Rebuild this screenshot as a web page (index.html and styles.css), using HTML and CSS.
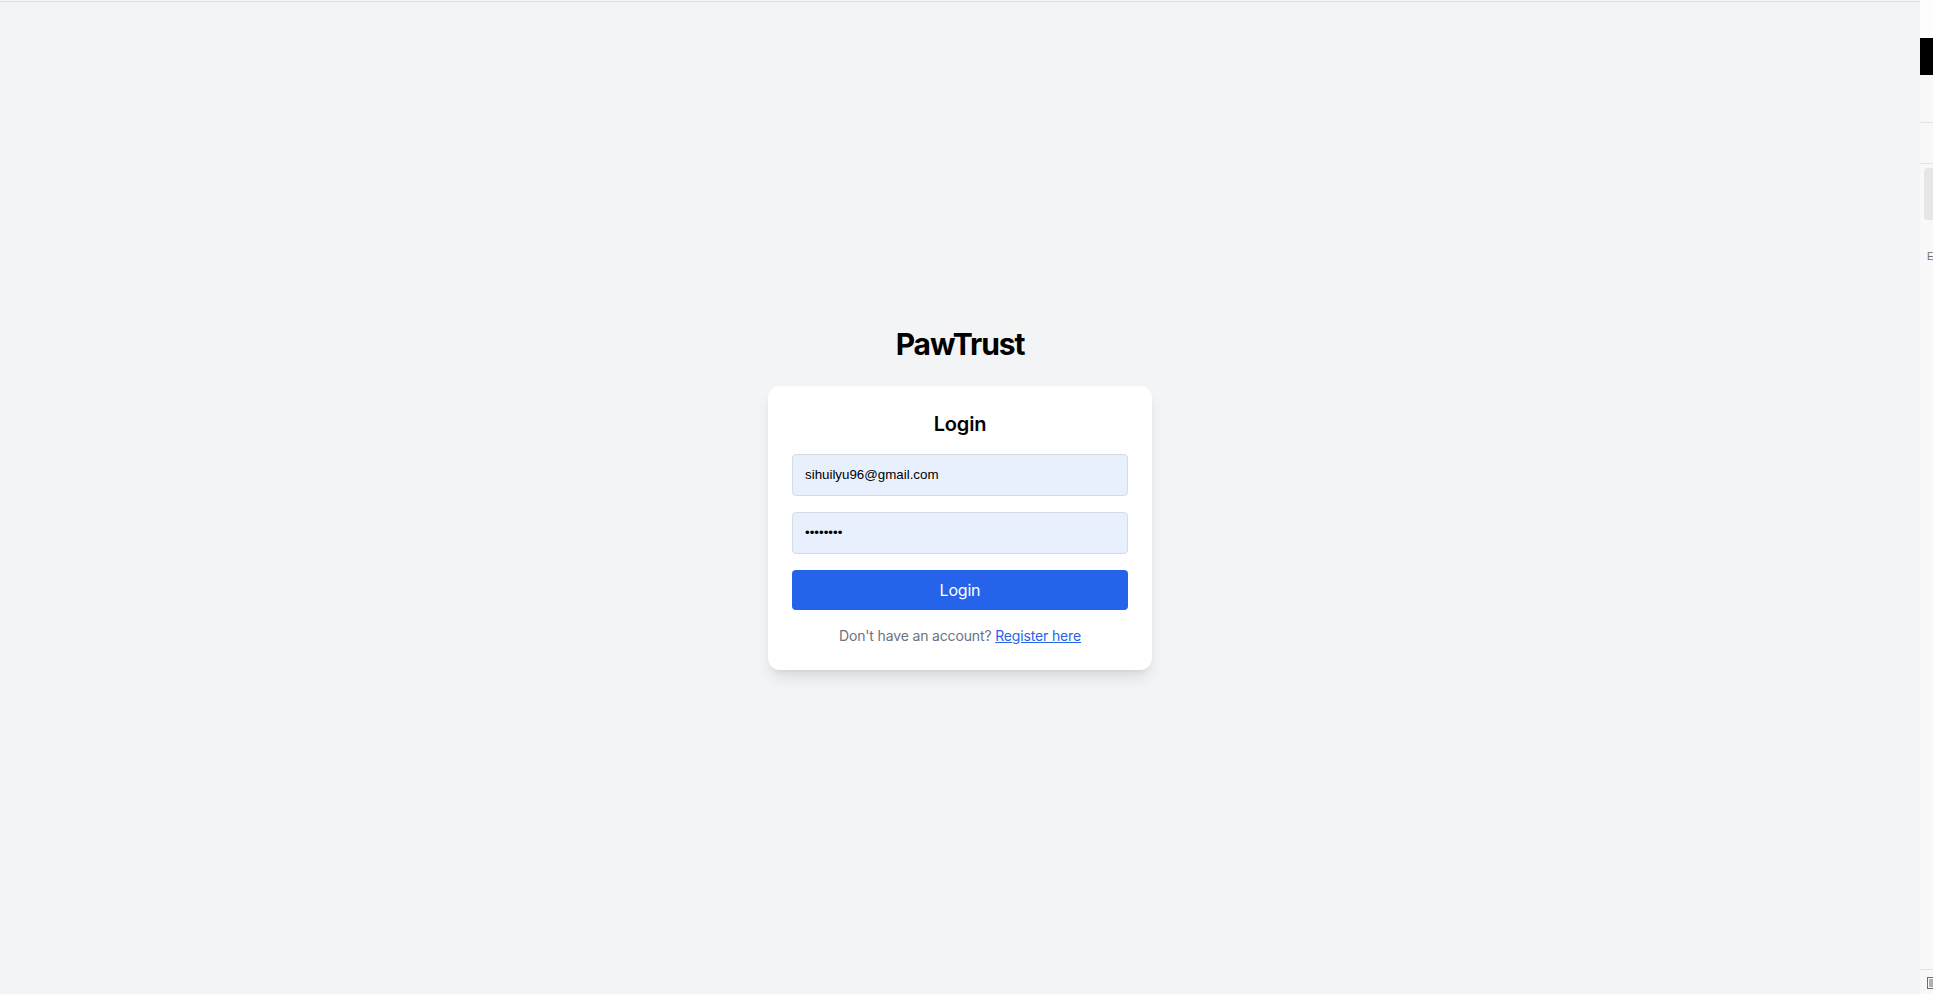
FILE: index.html
```html
<!DOCTYPE html>
<html lang="en">
<head>
<meta charset="utf-8">
<title>PawTrust - Login</title>
<link rel="stylesheet" href="styles.css">
</head>
<body>
<div class="app">
  <main class="main">
    <div class="topline"></div>
    <div class="center">
      <div class="auth">
        <h1 class="brand">PawTrust</h1>
        <div class="card">
          <h2 class="card-title">Login</h2>
          <form class="form">
            <input class="field" type="email" value="sihuilyu96@gmail.com">
            <input class="field" type="password" value="12345678">
            <button class="btn" type="button">Login</button>
          </form>
          <p class="footnote">Don't have an account? <a class="link" href="#">Register here</a></p>
        </div>
      </div>
    </div>
  </main>
  <aside class="strip">
    <div class="strip-top"></div>
    <div class="strip-black"></div>
    <div class="strip-sec"></div>
    <div class="strip-sec2">
      <div class="strip-box"></div>
      <div class="strip-label">E</div>
    </div>
    <div class="strip-foot">
      <svg class="strip-icon" width="8" height="12" viewBox="0 0 8 12"><rect x="0.5" y="0.5" width="7" height="11" fill="none" stroke="#6b6b6b" stroke-width="1"/><path d="M2 3h4M2 5h4M2 7h4M2 9h4" stroke="#6b6b6b" stroke-width="1"/></svg>
    </div>
  </aside>
</div>
</body>
</html>
```

FILE: styles.css
```css
* { box-sizing: border-box; }
html, body { margin: 0; padding: 0; }
body {
  font-family: Inter, "Noto Sans", "Liberation Sans", sans-serif;
  background: #f3f4f6;
  color: #000;
}
.app {
  display: flex;
  height: 994px;
  overflow: hidden;
}
.main {
  width: 1920px;
  flex: none;
  display: flex;
  flex-direction: column;
  padding-top: 1px;
}
.topline {
  height: 1px;
  background: #dfe1e0;
  flex: none;
}
.center {
  flex: 1;
  display: flex;
  align-items: center;
  justify-content: center;
}
.auth {
  display: flex;
  flex-direction: column;
  align-items: center;
  margin-top: -1px;
}
.brand {
  margin: 0 0 24px;
  font-size: 30px;
  line-height: 36px;
  font-weight: 700;
  letter-spacing: -1.1px;
}
.card {
  width: 384px;
  background: #fff;
  border-radius: 12px;
  padding: 24px;
  box-shadow: 0 10px 15px -3px rgba(0,0,0,0.1), 0 4px 6px -4px rgba(0,0,0,0.1);
}
.card-title {
  margin: 0 0 16px;
  text-align: center;
  font-size: 20px;
  line-height: 28px;
  font-weight: 600;
  letter-spacing: -0.2px;
}
.form {
  display: flex;
  flex-direction: column;
  gap: 16px;
  margin: 0;
}
.field {
  display: block;
  width: 100%;
  height: 42px;
  padding: 8px 12px;
  border: 1px solid #d6dbe3;
  border-radius: 4px;
  background: #e8f0fe;
  font-family: "Liberation Sans", Arial, sans-serif;
  font-size: 13.33px;
  line-height: 24px;
  color: #000;
  outline: none;
}
.btn {
  display: block;
  width: 100%;
  height: 40px;
  border: 0;
  border-radius: 4px;
  background: #2563eb;
  color: #fff;
  font-family: Inter, "Noto Sans", sans-serif;
  font-size: 16px;
  line-height: 24px;
  font-weight: 400;
  letter-spacing: -0.2px;
  cursor: pointer;
}
.footnote {
  margin: 16px 0 0;
  text-align: center;
  font-size: 14px;
  line-height: 20px;
  color: #6b7280;
  letter-spacing: -0.15px;
}
.link {
  color: #2563eb;
  text-decoration: underline;
}
.strip {
  width: 13px;
  flex: none;
  background: #f8f8f8;
  display: flex;
  flex-direction: column;
}
.strip-top { height: 38px; background: #fdfdfd; }
.strip-black { height: 37px; background: #000; }
.strip-sec { height: 48px; border-bottom: 1px solid #e4e4e4; }
.strip-sec2 {
  flex: 1;
  border-top: 1px solid #e4e4e4;
  margin-top: 40px;
  padding: 4px 0 0 4px;
}
.strip-box {
  height: 52px;
  background: #e6e6e6;
  border-radius: 4px 0 0 4px;
}
.strip-label {
  margin-top: 31px;
  padding-left: 3px;
  font-family: "Liberation Sans", sans-serif;
  font-size: 10px;
  line-height: 12px;
  color: #707070;
}
.strip-foot {
  height: 25px;
  border-top: 1px solid #e4e4e4;
  padding: 7px 0 0 7px;
}
.strip-icon { display: block; }
```
